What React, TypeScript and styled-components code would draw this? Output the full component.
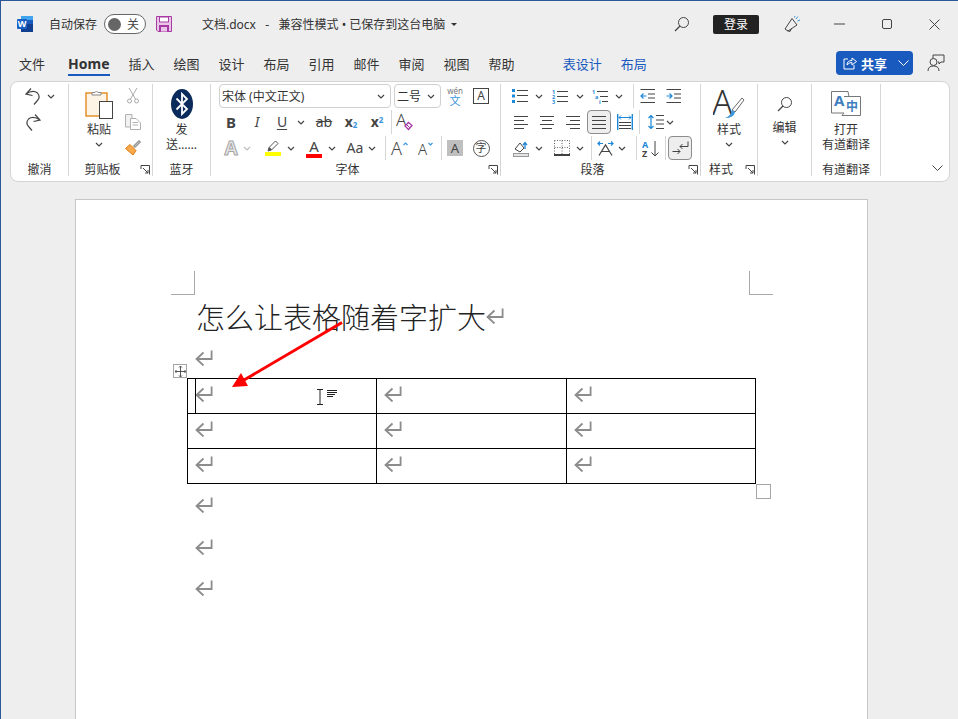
import React from "react";
import styled, { createGlobalStyle } from "styled-components";

const GlobalStyle = createGlobalStyle`
   html, body {
      margin: 0;
      padding: 0;
      background: #eeeeee;
   }
   * {
      box-sizing: border-box;
   }
`;

const Win = styled.div`
   width: 958px;
   height: 719px;
   overflow: hidden;
   background: #eeeeee;
   border-top: 1px solid #2b579a;
   border-left: 1px solid #2b579a;
   font-family: "Noto Sans", "Noto Sans CJK SC", sans-serif;
   font-size: 12px;
   color: #333;
   display: flex;
   flex-direction: column;
`;

/* ---------- title bar ---------- */
const TitleBar = styled.div`
   height: 47px;
   flex: none;
   display: flex;
   align-items: center;
   padding-bottom: 1px;
`;
const WordLogo = styled.svg`
   width: 16px;
   height: 16px;
   margin-left: 16px;
`;
const AutoSave = styled.span`
   margin-left: 16px;
   width: 55px;
   font-size: 12px;
   color: #333;
`;
const Toggle = styled.div`
   width: 42px;
   height: 20px;
   border: 1px solid #666;
   border-radius: 10px;
   background: #fff;
   display: flex;
   align-items: center;
   padding-left: 3px;
   gap: 6px;
   font-size: 12px;
   color: #444;
`;
const Knob = styled.i`
   width: 13px;
   height: 13px;
   border-radius: 50%;
   background: #666;
`;
const SaveIcon = styled.svg`
   width: 16px;
   height: 16px;
   margin-left: 10px;
`;
const DocTitle = styled.span`
   margin-left: 30px;
   width: 248px;
   font-size: 12px;
   white-space: pre;
   color: #333;
`;
const TitleCaret = styled.i`
   width: 0;
   height: 0;
   margin-left: 1px;
   border: 3px solid transparent;
   border-top: 3.5px solid #333;
   border-bottom: 0;
`;
const TitleRight = styled.div`
   margin-left: auto;
   display: flex;
   align-items: center;
`;
const BarIcon = styled.div<{ $w: number }>`
   width: ${({ $w }) => $w}px;
   height: 24px;
   display: flex;
   align-items: center;
   justify-content: center;
`;
const LoginBtn = styled.div`
   width: 46px;
   height: 19px;
   margin: 0 21px 0 19px;
   border-radius: 2px;
   background: #222;
   color: #fff;
   font-size: 12px;
   display: flex;
   align-items: center;
   justify-content: center;
`;

/* ---------- tab strip ---------- */
const TabBar = styled.div`
   height: 33px;
   flex: none;
   display: flex;
   align-items: center;
   padding: 0 13px 3px 18px;
   gap: 19px;
   font-size: 13px;
`;
const Tab = styled.span<{ $contextual?: boolean }>`
   color: ${({ $contextual }) => ($contextual ? "#185abd" : "#333")};
`;
const HomeTab = styled.span`
   position: relative;
   margin-left: 4px;
   font-size: 14px;
   font-weight: 700;
   color: #333;
   &::after {
      content: "";
      position: absolute;
      left: 0;
      right: -1px;
      bottom: -3px;
      height: 2px;
      background: #185abd;
   }
`;
const ContextTabs = styled.div`
   margin-left: 29px;
   display: flex;
   gap: 19px;
`;
const TabRight = styled.div`
   margin-left: auto;
   display: flex;
   align-items: center;
`;
const ShareBtn = styled.div`
   width: 77px;
   height: 24px;
   border-radius: 4px;
   background: #185abd;
   color: #fff;
   font-size: 13px;
   font-weight: 700;
   display: flex;
   align-items: center;
   padding-left: 7px;
   gap: 4px;
`;
const ShareChev = styled.svg`
   width: 11px;
   height: 6px;
   margin-left: 7px;
`;
const CommentIcon = styled.svg`
   width: 18px;
   height: 18px;
   margin-left: 14px;
`;

/* ---------- ribbon ---------- */
const Ribbon = styled.div`
   flex: none;
   width: 940px;
   height: 101px;
   margin-left: 9px;
   background: #fff;
   border: 1px solid #d4d4d4;
   border-radius: 8px;
   display: flex;
   align-items: flex-start;
   padding-top: 2px;
`;
const Group = styled.div<{ $w: number }>`
   flex: none;
   width: ${({ $w }) => $w}px;
   height: 92px;
   border-right: 1px solid #d6d6d6;
   display: flex;
   flex-direction: column;
`;
const GroupBody = styled.div`
   flex: 1;
   min-height: 0;
   display: flex;
`;
const Rows = styled.div`
   display: flex;
   flex-direction: column;
   gap: 2px;
`;
const Row = styled.div`
   height: 24px;
   display: flex;
   align-items: center;
`;
const Footer = styled.div`
   flex: none;
   height: 14px;
   display: flex;
   line-height: 16px;
   overflow: hidden;
   font-size: 12px;
   color: #333;
`;
const FooterLabel = styled.span`
   flex: 1;
   text-align: center;
   white-space: nowrap;
`;
const Launcher = styled.svg`
   flex: none;
   width: 16px;
   height: 14px;
`;
const Tool = styled.div<{ $w: number; $ml?: number; $on?: boolean }>`
   flex: none;
   width: ${({ $w }) => $w}px;
   height: 24px;
   margin-left: ${({ $ml }) => $ml || 0}px;
   display: flex;
   align-items: center;
   justify-content: center;
   border: ${({ $on }) => ($on ? "1px solid #8c8c8c" : "0")};
   border-radius: ${({ $on }) => ($on ? "4px" : "0")};
   background: ${({ $on }) => ($on ? "#eeeeee" : "transparent")};
`;
const RowSep = styled.i<{ $ml?: number }>`
   flex: none;
   width: 1px;
   height: 24px;
   margin-left: ${({ $ml }) => $ml || 0}px;
   background: #d6d6d6;
`;
const Glyph = styled.span<{
   $size?: number;
   $bold?: boolean;
   $italic?: boolean;
   $color?: string;
}>`
   font-size: ${({ $size }) => $size || 14}px;
   font-weight: ${({ $bold }) => ($bold ? 700 : 400)};
   font-style: ${({ $italic }) => ($italic ? "italic" : "normal")};
   color: ${({ $color }) => $color || "#444"};
   line-height: 1;
`;
const UnderGlyph = styled(Glyph)`
   text-decoration: underline;
   text-underline-offset: 2px;
`;
const StrikeGlyph = styled(Glyph)`
   text-decoration: line-through;
`;
const Script = styled.span<{ $up?: boolean }>`
   font-size: 8px;
   font-weight: 700;
   color: #3a96dd;
   align-self: ${({ $up }) => ($up ? "flex-start" : "flex-end")};
   margin: ${({ $up }) => ($up ? "4px 0 0 0" : "0 0 4px 0")};
`;
const GhostA = styled.span`
   font-size: 19px;
   font-weight: 700;
   color: #e6e6e6;
   -webkit-text-stroke: 1px #a6a6a6;
   line-height: 1;
`;
const ColorStack = styled.div`
   width: 16px;
   display: flex;
   flex-direction: column;
   align-items: center;
`;
const ColorBar = styled.i<{ $color: string }>`
   display: block;
   width: 16px;
   height: 4px;
   background: ${({ $color }) => $color};
`;
const ShadedA = styled.div`
   width: 16px;
   height: 16px;
   background: #bfbfbf;
   color: #444;
   font-size: 13px;
   line-height: 16px;
   text-align: center;
`;
const CircleChar = styled.div`
   width: 17px;
   height: 17px;
   border: 1.3px solid #555;
   border-radius: 50%;
   color: #444;
   font-size: 11px;
   line-height: 14px;
   text-align: center;
`;
const BoxA = styled.div`
   width: 16px;
   height: 16px;
   border: 1px solid #444;
   color: #444;
   font-size: 12px;
   line-height: 14px;
   text-align: center;
`;
const Phonetic = styled.div`
   display: flex;
   flex-direction: column;
   align-items: center;
   line-height: 1;
   font-size: 8px;
   color: #777;
`;
const PhoneticChar = styled.span`
   font-size: 11px;
   color: #3a96dd;
`;
const Select = styled.div<{ $w: number; $ml?: number }>`
   flex: none;
   width: ${({ $w }) => $w}px;
   height: 24px;
   margin-left: ${({ $ml }) => $ml || 0}px;
   border: 1px solid #d0d0d0;
   border-radius: 4px;
   display: flex;
   align-items: center;
   justify-content: space-between;
   padding: 0 5px 0 2px;
   font-size: 12px;
   color: #333;
   white-space: nowrap;
`;
const BigTool = styled.div<{ $w: number; $ml?: number }>`
   flex: none;
   width: ${({ $w }) => $w}px;
   margin-left: ${({ $ml }) => $ml || 0}px;
   padding-top: 2px;
   display: flex;
   flex-direction: column;
   align-items: center;
   text-align: center;
   line-height: 15px;
   font-size: 12px;
   color: #333;
   white-space: nowrap;
`;
const BigIcon = styled.div<{ $pull?: number }>`
   height: 36px;
   display: flex;
   align-items: center;
   justify-content: center;
   margin-bottom: ${({ $pull }) => -($pull || 0)}px;
`;
const ChevLine = styled.div`
   height: 15px;
   display: flex;
   align-items: center;
`;
const RibbonEnd = styled.div`
   flex: 1;
   height: 92px;
   display: flex;
   align-items: flex-end;
   justify-content: flex-end;
   padding: 0 6px 5px 0;
`;

/* ---------- document ---------- */
const DocArea = styled.div`
   flex: 1;
   min-height: 0;
   padding: 17px 0 0 74px;
`;
const Page = styled.div`
   width: 793px;
   height: 540px;
   background: #fff;
   border: 1px solid #c6c6c6;
   padding: 71px 0 0 95px;
`;
const CropRow = styled.div`
   width: 602px;
   display: flex;
   justify-content: space-between;
`;
const Crop = styled.i<{ $right?: boolean }>`
   width: 24px;
   height: 24px;
   border-bottom: 1px solid #a8a8a8;
   border-right: ${({ $right }) => ($right ? "0" : "1px solid #a8a8a8")};
   border-left: ${({ $right }) => ($right ? "1px solid #a8a8a8" : "0")};
`;
const DocBody = styled.div`
   margin-left: 16px;
`;
const Heading = styled.div`
   height: 42px;
   padding-left: 9px;
   display: flex;
   align-items: center;
   font-size: 29px;
   font-weight: 300;
   color: #222;
   white-space: nowrap;
`;
const Para = styled.div<{ $h: number }>`
   height: ${({ $h }) => $h}px;
   padding-left: 8px;
   display: flex;
   align-items: center;
`;
const TableWrap = styled.div`
   position: relative;
   width: 569px;
`;
const Grid = styled.table`
   width: 569px;
   table-layout: fixed;
   border-collapse: collapse;
   border: 1px solid #000;
`;
const Cell = styled.td`
   height: 35px;
   padding: 0 0 5px 7px;
   border: 1px solid #000;
   line-height: 0;
`;
const Caret = styled.i`
   position: absolute;
   left: 8px;
   top: 1px;
   width: 1px;
   height: 34px;
   background: #000;
`;
const MoveHandle = styled.div`
   position: absolute;
   left: -14px;
   top: -14px;
   width: 14px;
   height: 14px;
   background: #fff;
   border: 1px solid #a6a6a6;
   display: flex;
   align-items: center;
   justify-content: center;
`;
const SizeHandle = styled.i`
   position: absolute;
   left: 569px;
   top: 106px;
   width: 15px;
   height: 15px;
   background: #fff;
   border: 1px solid #a6a6a6;
`;
const RedArrow = styled.svg`
   position: absolute;
   left: 44px;
   top: -57px;
   width: 114px;
   height: 68px;
   overflow: visible;
`;
const MouseCursor = styled.svg`
   position: absolute;
   left: 129px;
   top: 11px;
   width: 22px;
   height: 18px;
`;

/* ---------- icons ---------- */
const S = { fill: "none", stroke: "#444", strokeWidth: 1 };

const Chev = ({ w, ml }: { w: number; ml?: number }) => (
   <Tool $w={w} $ml={ml}>
      <svg width="8" height="5" viewBox="0 0 8 5">
         <path d="M1 1 L4 4 L7 1" fill="none" stroke="#444" strokeWidth="1.2" />
      </svg>
   </Tool>
);

const Mark = () => (
   <svg width="18" height="16" viewBox="0 0 18 16">
      <path
         d="M16.6 .5 V9 H2 M8.5 2.5 L1.5 9 L8.5 15.5"
         fill="none"
         stroke="#8c8c8c"
         strokeWidth="1.8"
      />
   </svg>
);

const Lines = ({ ys, x1, x2 }: { ys: number[]; x1: number; x2: number }) => (
   <>
      {ys.map((y) => (
         <path key={y} d={`M${x1} ${y}.5 H${x2}`} {...S} />
      ))}
   </>
);

const Align = ({ rows }: { rows: [number, number][] }) => (
   <svg width="16" height="14" viewBox="0 0 16 14">
      {rows.map(([a, b], i) => (
         <path key={i} d={`M${a} ${1 + i * 4}.5 H${b}`} {...S} />
      ))}
   </svg>
);

const Launch = () => (
   <Launcher viewBox="0 0 16 14">
      <path d="M5 3.5 H13.5 V12.5 M5 3.5 V7 M7 6 L12 11 M12 8 V11 H9" {...S} />
   </Launcher>
);

function App() {
   return (
      <>
         <GlobalStyle />
         <Win>
            <TitleBar>
               <WordLogo viewBox="0 0 16 16">
                  <rect x="4" y="0" width="12" height="16" rx="1" fill="#185abd" />
                  <rect x="4" y="8" width="12" height="8" fill="#103f91" />
                  <rect x="4" y="0" width="12" height="4" fill="#41a5ee" />
                  <rect x="0" y="3" width="10" height="10" rx="1" fill="#1a5fc4" />
                  <text x="5" y="11" fontSize="9" fontWeight="700" fill="#fff" textAnchor="middle">
                     W
                  </text>
               </WordLogo>
               <AutoSave>自动保存</AutoSave>
               <Toggle>
                  <Knob />关
               </Toggle>
               <SaveIcon viewBox="0 0 16 16">
                  <path d="M.5.5 H15.5 V15.5 H2 L.5 14 Z" fill="#e9c6e8" stroke="#a83aa5" />
                  <rect x="3.5" y="1" width="9" height="5" fill="#fff" stroke="#a83aa5" />
                  <rect x="3" y="9" width="10" height="6.5" fill="#a83aa5" />
                  <rect x="5" y="11" width="6" height="4.5" fill="#e9c6e8" />
               </SaveIcon>
               <DocTitle>文档.docx   -   兼容性模式 • 已保存到这台电脑</DocTitle>
               <TitleCaret />
               <TitleRight>
                  <BarIcon $w={24}>
                     <svg width="16" height="16" viewBox="0 0 16 16">
                        <circle cx="9.5" cy="6.5" r="5" {...S} />
                        <path d="M6 10 L1 15" {...S} strokeWidth="1.2" />
                     </svg>
                  </BarIcon>
                  <LoginBtn>登录</LoginBtn>
                  <BarIcon $w={24}>
                     <svg width="18" height="18" viewBox="0 0 18 18">
                        <path d="M2 14 L9 3.5 L14 10 L5 16 Z M4 15.5 L7 16.5 L8.5 13.5" {...S} />
                        <path d="M13 4 L15 1.5 M14.5 6 L17 5 M11.5 2.5 L12 1" fill="none" stroke="#3a96dd" />
                     </svg>
                  </BarIcon>
                  <BarIcon $w={11} />
                  <BarIcon $w={48}>
                     <svg width="11" height="2" viewBox="0 0 11 2">
                        <path d="M0 1 H11" {...S} />
                     </svg>
                  </BarIcon>
                  <BarIcon $w={48}>
                     <svg width="10" height="10" viewBox="0 0 10 10">
                        <rect x=".5" y=".5" width="9" height="9" rx="1.5" {...S} />
                     </svg>
                  </BarIcon>
                  <BarIcon $w={47}>
                     <svg width="11" height="11" viewBox="0 0 11 11">
                        <path d="M.5 .5 L10.5 10.5 M10.5 .5 L.5 10.5" {...S} />
                     </svg>
                  </BarIcon>
               </TitleRight>
            </TitleBar>

            <TabBar>
               <Tab>文件</Tab>
               <HomeTab>Home</HomeTab>
               <Tab>插入</Tab>
               <Tab>绘图</Tab>
               <Tab>设计</Tab>
               <Tab>布局</Tab>
               <Tab>引用</Tab>
               <Tab>邮件</Tab>
               <Tab>审阅</Tab>
               <Tab>视图</Tab>
               <Tab>帮助</Tab>
               <ContextTabs>
                  <Tab $contextual>表设计</Tab>
                  <Tab $contextual>布局</Tab>
               </ContextTabs>
               <TabRight>
                  <ShareBtn>
                     <svg width="14" height="14" viewBox="0 0 14 14">
                        <path
                           d="M5 3 H1 V13 H11 V9 M4 9 Q4 4.5 9 4.5 V2 L13.5 5.5 L9 9 V6.5 Q6 6.5 4 9 Z"
                           fill="none"
                           stroke="#fff"
                        />
                     </svg>
                     共享
                     <ShareChev viewBox="0 0 11 6">
                        <path d="M.5 .5 L5.5 5.5 L10.5 .5" fill="none" stroke="#fff" />
                     </ShareChev>
                  </ShareBtn>
                  <CommentIcon viewBox="0 0 18 18">
                     <path d="M6 5 V1 H17 V8 H14 L12 10 V8 H11" {...S} />
                     <circle cx="6.5" cy="8" r="3.5" fill="#eee" stroke="#444" />
                     <path d="M1 17 Q1 12 6.5 12 Q12 12 12 17" {...S} />
                  </CommentIcon>
               </TabRight>
            </TabBar>

            <Ribbon>
               <Group $w={58}>
                  <GroupBody>
                     <Rows>
                        <Row>
                           <Tool $w={22} $ml={11}>
                              <svg width="16" height="17" viewBox="0 0 16 17">
                                 <path d="M6 .5 L1 6 L7.5 7.5 M1 6 Q8 1.5 12.5 5 Q16 9.5 12 13 L9 16.5" {...S} strokeWidth="1.2" />
                              </svg>
                           </Tool>
                           <Chev w={14} />
                        </Row>
                        <Row>
                           <Tool $w={22} $ml={11}>
                              <svg width="16" height="17" viewBox="0 0 16 17">
                                 <path d="M10 .5 L15 6 L8.5 7.5 M15 6 Q8 1.5 3.5 5 Q0 9.5 4 13 L7 16.5" {...S} strokeWidth="1.2" />
                              </svg>
                           </Tool>
                        </Row>
                     </Rows>
                  </GroupBody>
                  <Footer>
                     <FooterLabel>撤消</FooterLabel>
                  </Footer>
               </Group>

               <Group $w={84}>
                  <GroupBody>
                     <BigTool $w={40} $ml={10}>
                        <BigIcon>
                           <svg width="28" height="30" viewBox="0 0 28 30">
                              <rect x="1" y="4" width="21" height="23" fill="#fdf4e6" stroke="#e08a1e" strokeWidth="1.4" />
                              <path d="M7 6 V3.5 H10 Q11.5 .5 13 3.5 H16 V6 Z" fill="#fff" stroke="#888" />
                              <rect x="14.5" y="12.5" width="13" height="17" fill="#fff" stroke="#444" />
                           </svg>
                        </BigIcon>
                        粘贴
                        <ChevLine>
                           <Chev w={12} />
                        </ChevLine>
                     </BigTool>
                     <Rows>
                        <Tool $w={22} $ml={3}>
                           <svg width="12" height="16" viewBox="0 0 12 16">
                              <path d="M2 0 L8.5 11 M10 0 L3.5 11" fill="none" stroke="#aaa" />
                              <circle cx="2.5" cy="13" r="2" fill="none" stroke="#aaa" />
                              <circle cx="9.5" cy="13" r="2" fill="none" stroke="#aaa" />
                           </svg>
                        </Tool>
                        <Tool $w={22} $ml={3}>
                           <svg width="16" height="16" viewBox="0 0 16 16">
                              <path d="M.5 .5 H7 V13 H.5 Z" fill="#f2f2f2" stroke="#b0b0b0" />
                              <path d="M5.5 4.5 H11 L15.5 9 V15.5 H5.5 Z M7.5 8.5 H13 M7.5 11 H13" fill="#fff" stroke="#b0b0b0" />
                           </svg>
                        </Tool>
                        <Tool $w={22} $ml={3}>
                           <svg width="16" height="16" viewBox="0 0 16 16">
                              <path d="M8.5 6 L14 .5 L15.5 2 L10 7.5 Z" fill="#bbb" stroke="#777" />
                              <path d="M5 4.5 L11 10.5 L8 15 L.5 8.5 Z" fill="#f8a94b" stroke="#e07a12" />
                           </svg>
                        </Tool>
                     </Rows>
                  </GroupBody>
                  <Footer>
                     <FooterLabel>剪贴板</FooterLabel>
                     <Launch />
                  </Footer>
               </Group>

               <Group $w={58}>
                  <GroupBody>
                     <BigTool $w={57}>
                        <BigIcon>
                           <svg width="22" height="30" viewBox="0 0 22 30">
                              <ellipse cx="11" cy="15" rx="11" ry="15" fill="#0b2b5c" />
                              <path d="M5.5 9.5 L16 20 L11 25 V5 L16 10 L5.5 20.5" fill="none" stroke="#fff" strokeWidth="1.8" />
                           </svg>
                        </BigIcon>
                        发
                        <br />
                        送……
                     </BigTool>
                  </GroupBody>
                  <Footer>
                     <FooterLabel>蓝牙</FooterLabel>
                  </Footer>
               </Group>

               <Group $w={290}>
                  <GroupBody>
                     <Rows>
                        <Row>
                           <Select $w={172} $ml={8}>
                              宋体 (中文正文)
                              <svg width="8" height="5" viewBox="0 0 8 5">
                                 <path d="M1 1 L4 4 L7 1" fill="none" stroke="#444" strokeWidth="1.2" />
                              </svg>
                           </Select>
                           <Select $w={47} $ml={3}>
                              二号
                              <svg width="8" height="5" viewBox="0 0 8 5">
                                 <path d="M1 1 L4 4 L7 1" fill="none" stroke="#444" strokeWidth="1.2" />
                              </svg>
                           </Select>
                           <Tool $w={28}>
                              <Phonetic>
                                 wén
                                 <PhoneticChar>文</PhoneticChar>
                              </Phonetic>
                           </Tool>
                           <Tool $w={24}>
                              <BoxA>A</BoxA>
                           </Tool>
                        </Row>
                        <Row>
                           <Tool $w={24} $ml={8}>
                              <Glyph $bold $size={15}>B</Glyph>
                           </Tool>
                           <Tool $w={28}>
                              <Glyph $italic>I</Glyph>
                           </Tool>
                           <Tool $w={22}>
                              <UnderGlyph>U</UnderGlyph>
                           </Tool>
                           <Chev w={16} />
                           <Tool $w={30}>
                              <StrikeGlyph>ab</StrikeGlyph>
                           </Tool>
                           <Tool $w={24}>
                              <Glyph $bold>x</Glyph>
                              <Script>2</Script>
                           </Tool>
                           <Tool $w={28}>
                              <Glyph $bold>x</Glyph>
                              <Script $up>2</Script>
                           </Tool>
                           <RowSep />
                           <Tool $w={24}>
                              <svg width="17" height="18" viewBox="0 0 17 18">
                                 <text x="0" y="13" fontSize="17" fontWeight="300" fill="#444">
                                    A
                                 </text>
                                 <path d="M9 13 L12.5 9.5 L16 12.5 L12.5 16.5 Z" fill="#fff" stroke="#a83aa5" strokeWidth="1.3" />
                                 <path d="M10.5 11.5 L14 15" stroke="#a83aa5" />
                              </svg>
                           </Tool>
                        </Row>
                        <Row>
                           <Tool $w={24} $ml={8}>
                              <GhostA>A</GhostA>
                           </Tool>
                           <Tool $w={8}>
                              <svg width="8" height="5" viewBox="0 0 8 5">
                                 <path d="M1 1 L4 4 L7 1" fill="none" stroke="#bbb" strokeWidth="1.2" />
                              </svg>
                           </Tool>
                           <Tool $w={16} $ml={14}>
                              <ColorStack>
                                 <svg width="16" height="12" viewBox="0 0 16 12">
                                    <path d="M3 11 L4 7.5 L10.5 1 L13 3.5 L6.5 10 Z" fill="#fff" stroke="#555" />
                                    <path d="M3 11 L4.5 7 L7 9.5 Z" fill="#555" />
                                 </svg>
                                 <ColorBar $color="#ffff00" />
                              </ColorStack>
                           </Tool>
                           <Chev w={20} />
                           <Tool $w={16} $ml={5}>
                              <ColorStack>
                                 <Glyph $size={15}>A</Glyph>
                                 <ColorBar $color="#ff0000" />
                              </ColorStack>
                           </Tool>
                           <Chev w={20} />
                           <Tool $w={26}>
                              <Glyph $size={14}>Aa</Glyph>
                           </Tool>
                           <Chev w={8} />
                           <RowSep $ml={9} />
                           <Tool $w={26}>
                              <svg width="17" height="16" viewBox="0 0 17 16">
                                 <text x="0" y="15" fontSize="18" fontWeight="300" fill="#444">
                                    A
                                 </text>
                                 <path d="M12.5 5 L14.5 3 L16.5 5" fill="none" stroke="#3a96dd" strokeWidth="1.2" />
                              </svg>
                           </Tool>
                           <Tool $w={28}>
                              <svg width="16" height="16" viewBox="0 0 16 16">
                                 <text x="0" y="15" fontSize="15" fontWeight="300" fill="#444">
                                    A
                                 </text>
                                 <path d="M10.5 3 L12.5 5 L14.5 3" fill="none" stroke="#3a96dd" strokeWidth="1.2" />
                              </svg>
                           </Tool>
                           <RowSep $ml={1} />
                           <Tool $w={26}>
                              <ShadedA>A</ShadedA>
                           </Tool>
                           <Tool $w={26}>
                              <CircleChar>字</CircleChar>
                           </Tool>
                        </Row>
                     </Rows>
                  </GroupBody>
                  <Footer>
                     <FooterLabel>字体</FooterLabel>
                     <Launch />
                  </Footer>
               </Group>

               <Group $w={200}>
                  <GroupBody>
                     <Rows>
                        <Row>
                           <Tool $w={22} $ml={8}>
                              <svg width="16" height="14" viewBox="0 0 16 14">
                                 <rect x="0" y="0" width="3" height="3" fill="#1e88d8" />
                                 <rect x="0" y="5.5" width="3" height="3" fill="#1e88d8" />
                                 <rect x="0" y="11" width="3" height="3" fill="#1e88d8" />
                                 <Lines ys={[1, 6, 12]} x1={5} x2={16} />
                              </svg>
                           </Tool>
                           <Chev w={16} />
                           <Tool $w={26}>
                              <svg width="16" height="15" viewBox="0 0 16 15">
                                 <g fontSize="5.5" fontWeight="700" fill="#1e88d8">
                                    <text x="0" y="5">1</text>
                                    <text x="0" y="10">2</text>
                                    <text x="0" y="15">3</text>
                                 </g>
                                 <Lines ys={[2, 7, 12]} x1={5} x2={16} />
                              </svg>
                           </Tool>
                           <Chev w={14} />
                           <Tool $w={26}>
                              <svg width="16" height="15" viewBox="0 0 16 15">
                                 <g fontSize="5.5" fontWeight="700" fill="#1e88d8">
                                    <text x="0" y="5">1</text>
                                    <text x="3" y="10">a</text>
                                    <text x="7" y="15">i</text>
                                 </g>
                                 <path d="M5 2.5 H16 M8 7.5 H16 M10 12.5 H16" {...S} />
                              </svg>
                           </Tool>
                           <Chev w={12} />
                           <RowSep $ml={8} />
                           <Tool $w={28}>
                              <svg width="16" height="14" viewBox="0 0 16 14">
                                 <path d="M.5 .5 H15 M8 5 H15 M8 9 H15 M.5 13.5 H15" {...S} />
                                 <path d="M6.5 7 H1 M3.5 4.5 L1 7 L3.5 9.5" fill="none" stroke="#1e88d8" strokeWidth="1.2" />
                              </svg>
                           </Tool>
                           <Tool $w={24}>
                              <svg width="16" height="14" viewBox="0 0 16 14">
                                 <path d="M.5 .5 H15 M8 5 H15 M8 9 H15 M.5 13.5 H15" {...S} />
                                 <path d="M.5 7 H6 M3.5 4.5 L6 7 L3.5 9.5" fill="none" stroke="#1e88d8" strokeWidth="1.2" />
                              </svg>
                           </Tool>
                        </Row>
                        <Row>
                           <Tool $w={26} $ml={7}>
                              <Align rows={[[1, 15], [1, 11], [1, 15], [1, 11]]} />
                           </Tool>
                           <Tool $w={26}>
                              <Align rows={[[1, 15], [3, 13], [1, 15], [3, 13]]} />
                           </Tool>
                           <Tool $w={26}>
                              <Align rows={[[1, 15], [5, 15], [1, 15], [5, 15]]} />
                           </Tool>
                           <Tool $w={24} $ml={1} $on>
                              <Align rows={[[1, 15], [1, 15], [1, 15], [1, 15]]} />
                           </Tool>
                           <Tool $w={28}>
                              <svg width="16" height="16" viewBox="0 0 16 16">
                                 <path d="M.7 0 V16 M15.3 0 V16" fill="none" stroke="#1e88d8" strokeWidth="1.4" />
                                 <path d="M2 3.5 H14 M4 1.5 L2 3.5 L4 5.5 M12 1.5 L14 3.5 L12 5.5" fill="none" stroke="#1e88d8" />
                                 <path d="M2 8.5 H14 M2 11.5 H14 M2 14.5 H14" {...S} />
                              </svg>
                           </Tool>
                           <RowSep />
                           <Tool $w={16} $ml={8}>
                              <svg width="16" height="14" viewBox="0 0 16 14">
                                 <path d="M3 0.5 V13.5 M.5 3 L3 .5 L5.5 3 M.5 11 L3 13.5 L5.5 11" fill="none" stroke="#1e88d8" strokeWidth="1.2" />
                                 <path d="M8 .5 H16 M8 5 H16 M8 9 H16 M8 13.5 H16" {...S} />
                              </svg>
                           </Tool>
                           <Chev w={12} />
                        </Row>
                        <Row>
                           <Tool $w={24} $ml={8}>
                              <svg width="16" height="17" viewBox="0 0 16 17">
                                 <path d="M2 9 L7 3 L11 8 L7 12 Z" fill="#fff" stroke="#444" />
                                 <path d="M12 9 V3 M10 5 L12 2.5 L14 5" fill="none" stroke="#1e88d8" strokeWidth="1.3" />
                                 <rect x=".5" y="13.5" width="15" height="3" fill="#e4e4e4" stroke="#999" />
                              </svg>
                           </Tool>
                           <Chev w={12} />
                           <Tool $w={20} $ml={7}>
                              <svg width="16" height="16" viewBox="0 0 16 16">
                                 <path d="M.5 .5 H15.5 V14 M.5 .5 V14 M8 .5 V14 M.5 7.5 H15.5" fill="none" stroke="#666" strokeDasharray="1 1.5" />
                                 <path d="M0 15 H16" stroke="#000" strokeWidth="1.5" />
                              </svg>
                           </Tool>
                           <Chev w={16} />
                           <RowSep $ml={3} />
                           <Tool $w={26}>
                              <svg width="17" height="16" viewBox="0 0 17 16">
                                 <path d="M1 3.5 H6 M3 1.5 L1 3.5 L3 5.5 M11 3.5 H16 M14 1.5 L16 3.5 L14 5.5" fill="none" stroke="#1e88d8" strokeWidth="1.2" />
                                 <path d="M2 15.5 L8.5 5 L15 15.5 M4.5 11.5 H12.5" fill="none" stroke="#444" strokeWidth="1.2" />
                              </svg>
                           </Tool>
                           <Chev w={8} />
                           <RowSep $ml={10} />
                           <Tool $w={28}>
                              <svg width="18" height="17" viewBox="0 0 18 17">
                                 <text x="0" y="8" fontSize="9" fontWeight="700" fill="#1e88d8">
                                    A
                                 </text>
                                 <text x="0" y="17" fontSize="9" fontWeight="700" fill="#444">
                                    Z
                                 </text>
                                 <path d="M13 1 V16 M9.5 12.5 L13 16 L16.5 12.5" {...S} />
                              </svg>
                           </Tool>
                           <RowSep />
                           <Tool $w={24} $ml={2} $on>
                              <svg width="17" height="15" viewBox="0 0 17 15">
                                 <path d="M16 .5 V5.5 H8 M10.5 3 L8 5.5 L10.5 8" fill="none" stroke="#444" />
                                 <path d="M.5 10.5 H8 M5.5 8 L8 10.5 L5.5 13" fill="none" stroke="#444" />
                              </svg>
                           </Tool>
                        </Row>
                     </Rows>
                  </GroupBody>
                  <Footer>
                     <FooterLabel>段落</FooterLabel>
                     <Launch />
                  </Footer>
               </Group>

               <Group $w={57}>
                  <GroupBody>
                     <BigTool $w={56}>
                        <BigIcon>
                           <svg width="32" height="30" viewBox="0 0 32 30">
                              <text x="-1" y="26" fontSize="34" fontWeight="300" fill="#333">
                                 A
                              </text>
                              <path d="M19 21 L29 9 L31 11 L22 23 Z" fill="#fff" stroke="#666" />
                              <path d="M12 29 Q18 27 19 21 L22 23 Q21 29 12 29 Z" fill="#3a96dd" />
                           </svg>
                        </BigIcon>
                        样式
                        <ChevLine>
                           <Chev w={12} />
                        </ChevLine>
                     </BigTool>
                  </GroupBody>
                  <Footer>
                     <FooterLabel>样式</FooterLabel>
                     <Launch />
                  </Footer>
               </Group>

               <Group $w={54}>
                  <GroupBody>
                     <BigTool $w={53}>
                        <BigIcon $pull={2}>
                           <svg width="16" height="16" viewBox="0 0 16 16">
                              <circle cx="9.5" cy="6.5" r="5" {...S} />
                              <path d="M6 10 L1 15" {...S} strokeWidth="1.2" />
                           </svg>
                        </BigIcon>
                        编辑
                        <ChevLine>
                           <Chev w={12} />
                        </ChevLine>
                     </BigTool>
                  </GroupBody>
               </Group>

               <Group $w={69}>
                  <GroupBody>
                     <BigTool $w={68}>
                        <BigIcon>
                           <svg width="30" height="27" viewBox="0 0 30 27">
                              <path d="M.5 .5 H17 L21 22 H.5 Z" fill="#fff" stroke="#777" />
                              <path d="M13 5.5 H29.5 V24.5 H11 L13 22" fill="#fff" stroke="#777" />
                              <text x="3" y="15" fontSize="15" fontWeight="700" fill="#3f7fc0">
                                 A
                              </text>
                              <text x="15" y="20" fontSize="12" fontWeight="700" fill="#3f7fc0">
                                 中
                              </text>
                           </svg>
                        </BigIcon>
                        打开
                        <br />
                        有道翻译
                     </BigTool>
                  </GroupBody>
                  <Footer>
                     <FooterLabel>有道翻译</FooterLabel>
                  </Footer>
               </Group>

               <RibbonEnd>
                  <svg width="11" height="6" viewBox="0 0 11 6">
                     <path d="M.5 .5 L5.5 5.5 L10.5 .5" {...S} />
                  </svg>
               </RibbonEnd>
            </Ribbon>

            <DocArea>
               <Page>
                  <CropRow>
                     <Crop />
                     <Crop $right />
                  </CropRow>
                  <DocBody>
                     <Heading>
                        怎么让表格随着字扩大
                        <Mark />
                     </Heading>
                     <Para $h={41}>
                        <Mark />
                     </Para>
                     <TableWrap>
                        <Grid>
                           <tbody>
                              {[0, 1, 2].map((r) => (
                                 <tr key={r}>
                                    {[0, 1, 2].map((c) => (
                                       <Cell key={c}>
                                          <Mark />
                                       </Cell>
                                    ))}
                                 </tr>
                              ))}
                           </tbody>
                        </Grid>
                        <Caret />
                        <MoveHandle>
                           <svg width="11" height="11" viewBox="0 0 11 11">
                              <path
                                 d="M5.5 0 V11 M0 5.5 H11 M4 1.5 L5.5 0 L7 1.5 M4 9.5 L5.5 11 L7 9.5 M1.5 4 L0 5.5 L1.5 7 M9.5 4 L11 5.5 L9.5 7"
                                 fill="none"
                                 stroke="#555"
                              />
                           </svg>
                        </MoveHandle>
                        <SizeHandle />
                        <RedArrow viewBox="0 0 114 68">
                           <path d="M111 1.5 L13 59" fill="none" stroke="#ff0000" strokeWidth="3" />
                           <path d="M1 66 L10 52 L17 65 Z" fill="#ff0000" />
                        </RedArrow>
                        <MouseCursor viewBox="0 0 22 18">
                           <path d="M1 .5 H7 M1 15.5 H7 M4 .5 V15.5" fill="none" stroke="#222" />
                           <path d="M11 1.5 H21 M11 3.5 H21 M11 5.5 H19 M11 7.5 H17" fill="none" stroke="#222" />
                        </MouseCursor>
                     </TableWrap>
                     <Para $h={42}>
                        <Mark />
                     </Para>
                     <Para $h={41}>
                        <Mark />
                     </Para>
                     <Para $h={42}>
                        <Mark />
                     </Para>
                  </DocBody>
               </Page>
            </DocArea>
         </Win>
      </>
   );
}

export default App;
